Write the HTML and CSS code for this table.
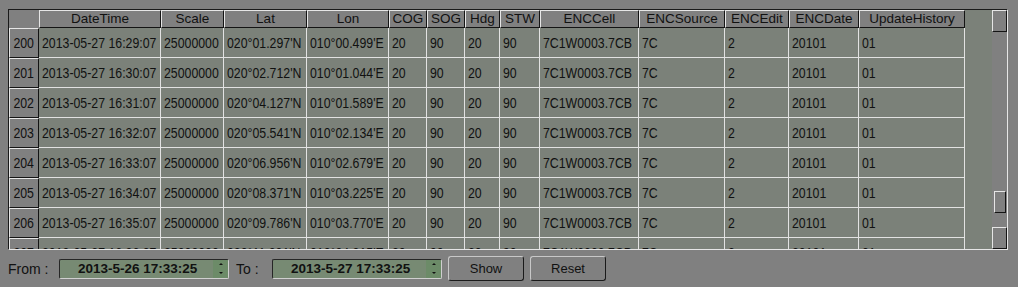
FILE: index.html
```html
<!DOCTYPE html>
<html lang="en">
<head>
    <meta charset="UTF-8">
    <meta name="viewport" content="width=device-width, initial-scale=1.0">
    <title>Route History</title>
    <link rel="stylesheet" href="styles.css">
</head>
<body>
    <div class="frame">
        <div class="grid-view">
            <table class="grid">
                <colgroup>
                    <col style="width: 30px">
                    <col style="width: 122px">
                    <col style="width: 63px">
                    <col style="width: 83px">
                    <col style="width: 82px">
                    <col style="width: 38px">
                    <col style="width: 38px">
                    <col style="width: 35px">
                    <col style="width: 40px">
                    <col style="width: 99px">
                    <col style="width: 86px">
                    <col style="width: 64px">
                    <col style="width: 70px">
                    <col style="width: 106px">
                </colgroup>
                <thead>
                    <tr>
                        <th class="corner"></th>
                        <th>DateTime</th>
                        <th>Scale</th>
                        <th>Lat</th>
                        <th>Lon</th>
                        <th>COG</th>
                        <th>SOG</th>
                        <th>Hdg</th>
                        <th>STW</th>
                        <th>ENCCell</th>
                        <th>ENCSource</th>
                        <th>ENCEdit</th>
                        <th>ENCDate</th>
                        <th>UpdateHistory</th>
                    </tr>
                </thead>
                <tbody>
                    <tr>
                        <th><span>200</span></th>
                        <td><span>2013-05-27 16:29:07</span></td><td><span>25000000</span></td><td><span>020°01.297'N</span></td><td><span>010°00.499'E</span></td>
                        <td><span>20</span></td><td><span>90</span></td><td><span>20</span></td><td><span>90</span></td>
                        <td><span>7C1W0003.7CB</span></td><td><span>7C</span></td><td><span>2</span></td><td><span>20101</span></td><td><span>01</span></td>
                    </tr>
                    <tr>
                        <th><span>201</span></th>
                        <td><span>2013-05-27 16:30:07</span></td><td><span>25000000</span></td><td><span>020°02.712'N</span></td><td><span>010°01.044'E</span></td>
                        <td><span>20</span></td><td><span>90</span></td><td><span>20</span></td><td><span>90</span></td>
                        <td><span>7C1W0003.7CB</span></td><td><span>7C</span></td><td><span>2</span></td><td><span>20101</span></td><td><span>01</span></td>
                    </tr>
                    <tr>
                        <th><span>202</span></th>
                        <td><span>2013-05-27 16:31:07</span></td><td><span>25000000</span></td><td><span>020°04.127'N</span></td><td><span>010°01.589'E</span></td>
                        <td><span>20</span></td><td><span>90</span></td><td><span>20</span></td><td><span>90</span></td>
                        <td><span>7C1W0003.7CB</span></td><td><span>7C</span></td><td><span>2</span></td><td><span>20101</span></td><td><span>01</span></td>
                    </tr>
                    <tr>
                        <th><span>203</span></th>
                        <td><span>2013-05-27 16:32:07</span></td><td><span>25000000</span></td><td><span>020°05.541'N</span></td><td><span>010°02.134'E</span></td>
                        <td><span>20</span></td><td><span>90</span></td><td><span>20</span></td><td><span>90</span></td>
                        <td><span>7C1W0003.7CB</span></td><td><span>7C</span></td><td><span>2</span></td><td><span>20101</span></td><td><span>01</span></td>
                    </tr>
                    <tr>
                        <th><span>204</span></th>
                        <td><span>2013-05-27 16:33:07</span></td><td><span>25000000</span></td><td><span>020°06.956'N</span></td><td><span>010°02.679'E</span></td>
                        <td><span>20</span></td><td><span>90</span></td><td><span>20</span></td><td><span>90</span></td>
                        <td><span>7C1W0003.7CB</span></td><td><span>7C</span></td><td><span>2</span></td><td><span>20101</span></td><td><span>01</span></td>
                    </tr>
                    <tr>
                        <th><span>205</span></th>
                        <td><span>2013-05-27 16:34:07</span></td><td><span>25000000</span></td><td><span>020°08.371'N</span></td><td><span>010°03.225'E</span></td>
                        <td><span>20</span></td><td><span>90</span></td><td><span>20</span></td><td><span>90</span></td>
                        <td><span>7C1W0003.7CB</span></td><td><span>7C</span></td><td><span>2</span></td><td><span>20101</span></td><td><span>01</span></td>
                    </tr>
                    <tr>
                        <th><span>206</span></th>
                        <td><span>2013-05-27 16:35:07</span></td><td><span>25000000</span></td><td><span>020°09.786'N</span></td><td><span>010°03.770'E</span></td>
                        <td><span>20</span></td><td><span>90</span></td><td><span>20</span></td><td><span>90</span></td>
                        <td><span>7C1W0003.7CB</span></td><td><span>7C</span></td><td><span>2</span></td><td><span>20101</span></td><td><span>01</span></td>
                    </tr>
                    <tr>
                        <th><span>207</span></th>
                        <td><span>2013-05-27 16:36:07</span></td><td><span>25000000</span></td><td><span>020°11.201'N</span></td><td><span>010°04.315'E</span></td>
                        <td><span>20</span></td><td><span>90</span></td><td><span>20</span></td><td><span>90</span></td>
                        <td><span>7C1W0003.7CB</span></td><td><span>7C</span></td><td><span>2</span></td><td><span>20101</span></td><td><span>01</span></td>
                    </tr>
                </tbody>
            </table>
        </div>
        <div class="vscroll">
            <div class="sb-btn"></div>
            <div class="sb-track">
                <div class="sb-thumb"></div>
            </div>
            <div class="sb-btn"></div>
        </div>
    </div>

    <div class="filter-bar">
        <span class="filter-label">From :</span>
        <div class="date-edit">
            <span class="date-text">2013-5-26 17:33:25</span>
            <span class="spin">
                <span class="spin-up"></span>
                <span class="spin-down"></span>
            </span>
        </div>
        <span class="filter-label to">To :</span>
        <div class="date-edit">
            <span class="date-text">2013-5-27 17:33:25</span>
            <span class="spin">
                <span class="spin-up"></span>
                <span class="spin-down"></span>
            </span>
        </div>
        <button class="btn" type="button">Show</button>
        <button class="btn" type="button">Reset</button>
    </div>
</body>
</html>
```

FILE: styles.css
```css
body {
    margin: 0;
    background-color: #808080;
    font-family: "Liberation Sans", Arial, sans-serif;
    color: #111;
}

/* sunken frame around the table and its scrollbar */
.frame {
    display: flex;
    box-sizing: border-box;
    width: 1000px;
    margin: 9px 0 0 8px;
    border-top: 1px solid #1a1a1a;
    border-left: 1px solid #1a1a1a;
    border-right: 1px solid #e6e6e6;
    border-bottom: 1px solid #e6e6e6;
}

.grid-view {
    width: 983px;
    height: 239px;
    overflow: hidden;
    background-color: #7b8179;
}

.grid {
    table-layout: fixed;
    width: 956px;
    border-collapse: separate;
    border-spacing: 0;
}

.grid th, .grid td {
    box-sizing: border-box;
    padding: 0;
    white-space: nowrap;
    overflow: hidden;
    font-weight: normal;
}

.grid thead tr {
    height: 18px;
}

.grid tbody tr {
    height: 30px;
}

/* raised header sections */
.grid th {
    background-color: #808080;
    border-top: 1px solid #e6e6e6;
    border-left: 1px solid #e6e6e6;
    border-right: 1px solid #141414;
    border-bottom: 1px solid #141414;
    text-align: center;
}

.grid thead th {
    font-size: 13.5px;
    line-height: 14px;
}

.grid thead th.corner {
    border: none;
}

.grid tbody th, .grid td {
    font-size: 14px;
    line-height: 16px;
}

.grid td {
    padding-left: 3px;
    border-right: 1px solid #e2e2e2;
    border-bottom: 1px solid #e2e2e2;
}

/* cell font is a tall, narrow face */
.grid td span, .grid tbody th span {
    display: inline-block;
    transform: scaleX(0.88);
    transform-origin: left center;
}

.grid tbody th span {
    transform-origin: center;
}

.vscroll {
    display: flex;
    flex-direction: column;
    width: 15px;
    background-color: #808080;
}

.sb-btn {
    box-sizing: border-box;
    height: 22px;
    border-top: 1px solid #e6e6e6;
    border-left: 1px solid #e6e6e6;
    border-right: 1px solid #141414;
    border-bottom: 1px solid #141414;
}

.sb-track {
    flex: 1;
}

.sb-thumb {
    box-sizing: border-box;
    width: 12px;
    height: 22px;
    margin: 159px 0 0 2px;
    border-top: 1px solid #e6e6e6;
    border-left: 1px solid #e6e6e6;
    border-right: 1px solid #141414;
    border-bottom: 1px solid #141414;
}

/* date range filter under the table */
.filter-bar {
    display: flex;
    align-items: center;
    height: 25px;
    margin: 6px 0 0 8px;
    font-size: 14px;
    white-space: nowrap;
}

.filter-label {
    width: 51px;
}

.filter-label.to {
    width: 36px;
    padding-left: 7px;
}

.date-edit {
    display: flex;
    box-sizing: border-box;
    width: 170px;
    height: 20px;
    border: 1px solid;
    border-color: #262626 #cfcfcf #cfcfcf #262626;
    border-radius: 2px;
    background-color: #778a73;
}

.date-text {
    flex: 1;
    padding-left: 18px;
    font-size: 13.5px;
    font-weight: bold;
    line-height: 18px;
}

.spin {
    display: flex;
    flex-direction: column;
    width: 15px;
    background-color: #6c8b68;
}

.spin-up, .spin-down {
    flex: 1;
    display: flex;
    align-items: center;
    justify-content: center;
}

.spin-up::before, .spin-down::before {
    content: "";
    width: 0;
    height: 0;
    border-left: 2px solid transparent;
    border-right: 2px solid transparent;
}

.spin-up::before {
    border-bottom: 2px solid #111;
}

.spin-down::before {
    border-top: 2px solid #111;
}

.btn {
    box-sizing: border-box;
    width: 76px;
    height: 25px;
    margin-left: 6px;
    padding: 0;
    font-family: inherit;
    font-size: 13px;
    color: #111;
    background-color: #808080;
    border: 1px solid;
    border-color: #c8c8c8 #1a1a1a #1a1a1a #c8c8c8;
    border-radius: 3px;
}
```
